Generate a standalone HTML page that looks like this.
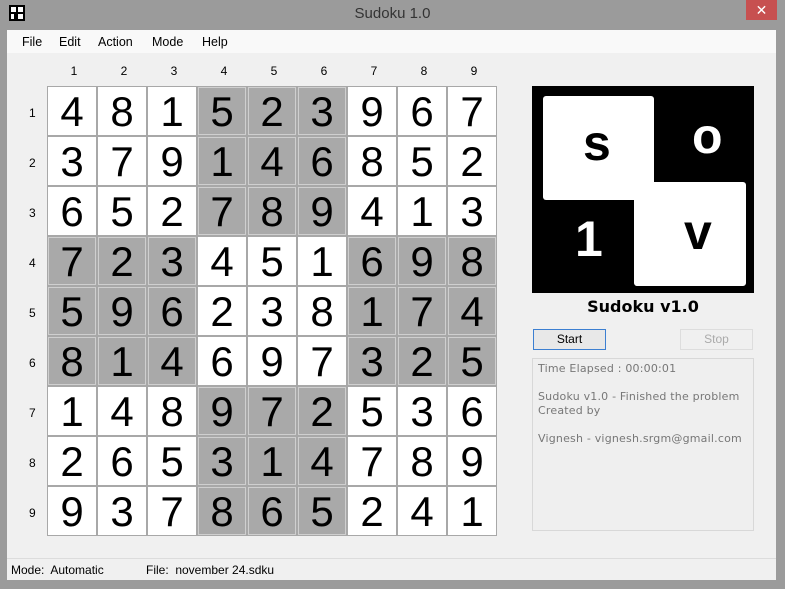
<!DOCTYPE html>
<html><head><style>
*{margin:0;padding:0;box-sizing:border-box}
body{width:785px;height:589px;background:#9b9b9b;position:relative;font-family:"Liberation Sans",sans-serif;overflow:hidden}
.abs{position:absolute}
#client{left:7px;top:30px;width:769px;height:550px;background:#f0f0f0}
#menu{left:7px;top:30px;width:769px;height:23px;background:#f9f9f9;font-size:12.5px;color:#000}
#menu span{position:absolute;top:5px}
.cl{font-size:12px;color:#000;width:50px;text-align:center}
.cell{position:absolute;width:50px;height:50px;border:1px solid #a8a8a8;background:#fff;font-size:42px;text-align:center;line-height:50px;color:#000}
.g{background:#a9a9a9;box-shadow:inset 0 0 0 1px #cfcfcf}
.lg{position:absolute;font:bold 50px "Liberation Sans",sans-serif;line-height:50px}
</style></head><body>
<div class="abs" style="left:9px;top:5px;width:16px;height:16px;background:#000"></div>
<div class="abs" style="left:11px;top:7px;width:5px;height:5px;background:#fff"></div>
<div class="abs" style="left:18px;top:7px;width:5px;height:5px;background:#fff"></div>
<div class="abs" style="left:11px;top:14px;width:3px;height:5px;background:#fff"></div>
<div class="abs" style="left:18px;top:14px;width:5px;height:5px;background:#fff"></div>
<div class="abs" style="left:0;top:5px;width:785px;text-align:center;font-size:15px;color:#333">Sudoku 1.0</div>
<div class="abs" style="left:746px;top:0;width:31px;height:20px;background:#c75050;color:#fff;text-align:center;font-size:14px;line-height:20px">✕</div>
<div class="abs" id="client"></div>
<div class="abs" id="menu"><span style="left:15px">File</span><span style="left:52px">Edit</span><span style="left:91px">Action</span><span style="left:145px">Mode</span><span style="left:195px">Help</span></div>
<div id="grid"></div>
<div class="abs" style="left:532px;top:86px;width:222px;height:207px;background:#000"></div>
<div class="abs" style="left:543px;top:96px;width:111px;height:104px;background:#fff;border-radius:3px"></div>
<div class="abs" style="left:634px;top:182px;width:112px;height:104px;background:#fff;border-radius:3px"></div>
<div class="lg" style="left:583px;top:118px;color:#000">s</div>
<div class="lg" style="left:692px;top:111px;color:#fff">o</div>
<div class="lg" style="left:575px;top:214px;color:#fff">1</div>
<div class="lg" style="left:684px;top:207px;color:#000">v</div>
<div class="abs" style="left:532px;top:297px;width:222px;text-align:center;font:bold 16px 'DejaVu Sans',sans-serif">Sudoku v1.0</div>
<div class="abs" style="left:533px;top:329px;width:73px;height:21px;border:1px solid #3c7fd1;background:#e8e8e8;font-size:12px;text-align:center;line-height:19px">Start</div>
<div class="abs" style="left:680px;top:329px;width:73px;height:21px;border:1px solid #ddd;background:#f0f0f0;color:#aaa;font-size:12px;text-align:center;line-height:19px">Stop</div>
<div class="abs" style="left:532px;top:358px;width:222px;height:173px;border:1px solid #d8d8d8;background:#efefef;font:11px 'DejaVu Sans',sans-serif;color:#777;padding:3px 5px;line-height:14px;letter-spacing:0.2px">Time Elapsed : 00:00:01<br><br>Sudoku v1.0 - Finished the problem<br>Created by<br><br>Vignesh - vignesh.srgm@gmail.com</div>
<div class="abs" style="left:7px;top:558px;width:769px;height:1px;background:#dcdcdc"></div>
<div class="abs" style="left:11px;top:563px;font-size:12px">Mode:&nbsp; Automatic</div>
<div class="abs" style="left:146px;top:563px;font-size:12px">File:&nbsp; november 24.sdku</div>
<script>
var d=["481523967","379146852","652789413","723451698","596238174","814697325","148972536","265314789","937865241"];
var h="";
for(var c=0;c<9;c++)h+='<div class="abs cl" style="left:'+(49+c*50)+'px;top:64px">'+(c+1)+'</div>';
for(var r=0;r<9;r++){h+='<div class="abs" style="left:29px;top:'+(106+r*50)+'px;font-size:12px">'+(r+1)+'</div>';
for(var c=0;c<9;c++){var br=Math.floor(r/3),bc=Math.floor(c/3);var g=((br+bc)%2==1);
h+='<div class="cell'+(g?' g':'')+'" style="left:'+(47+c*50)+'px;top:'+(86+r*50)+'px">'+d[r][c]+'</div>';}}
document.getElementById('grid').innerHTML=h;
</script>
</body></html>
